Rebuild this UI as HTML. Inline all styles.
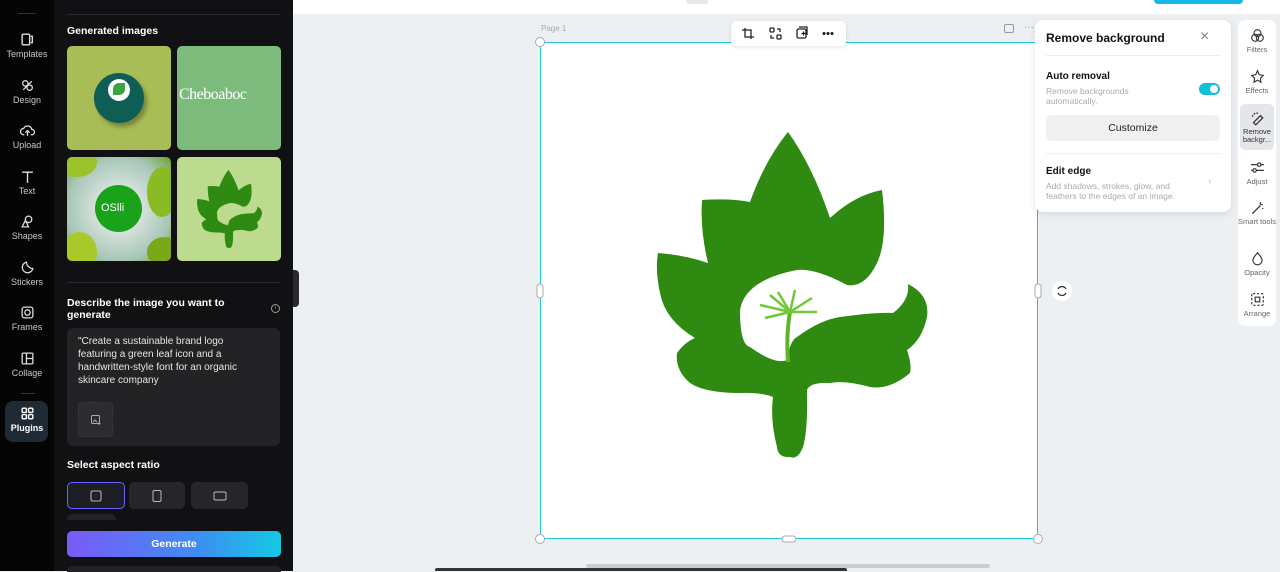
<!DOCTYPE html>
<html><head><meta charset="utf-8"><style>
*{margin:0;padding:0;box-sizing:border-box}
body{width:1280px;height:571px;overflow:hidden;position:relative;background:#edf0f3;font-family:"Liberation Sans",sans-serif}
.a{position:absolute}
.nav{left:0;top:0;width:54px;height:571px;background:#050505}
.ni{position:absolute;left:0;width:54px;text-align:center;color:#c8c8cc;font-size:9px}
.ni svg{display:block;margin:0 auto 2px}
.panel{left:54px;top:0;width:239px;height:571px;background:#111114}
.w{color:#fff;font-weight:bold;font-size:10.5px}
.img{position:absolute;width:104px;height:104px;border-radius:5px;overflow:hidden}
.ar{position:absolute;top:482px;height:27px;background:#26262a;border-radius:5px}
.ar i{position:absolute;left:50%;top:50%;transform:translate(-50%,-50%);border:1.3px solid #bbb;border-radius:2px}
.ti{position:absolute;left:0;width:38px;text-align:center;font-size:7.5px;color:#666}
.ti svg{display:block;margin:0 auto 2px}
</style></head><body>
<div class="a" style="left:293px;top:0;width:987px;height:14px;background:#fff"></div>
<div class="a" style="left:686px;top:0;width:22px;height:4px;background:#e8e8ea;border-radius:0 0 3px 3px"></div>
<div class="a" style="left:1154px;top:0;width:89px;height:4px;background:#17b8e8;border-radius:0 0 4px 4px"></div>

<div class="a nav">
<div class="a" style="left:18px;top:13px;width:18px;height:1px;background:#333"></div>
<div class="ni" style="top:32px"><svg width="15" height="15" viewBox="0 0 14 14" fill="none" stroke="#ddd" stroke-width="1.3"><rect x="2" y="2" width="7" height="10" rx="1"/><path d="M10 4h1.5v6H10"/></svg>Templates</div>
<div class="ni" style="top:78px"><svg width="15" height="15" viewBox="0 0 14 14" fill="none" stroke="#ddd" stroke-width="1.2"><circle cx="5" cy="5" r="2.5"/><circle cx="9" cy="9" r="2.5"/><path d="M3 11l8-8"/></svg>Design</div>
<div class="ni" style="top:123px"><svg width="15" height="15" viewBox="0 0 14 14" fill="none" stroke="#ddd" stroke-width="1.2"><path d="M4 11H3.5a3 3 0 0 1 0-6 4 4 0 0 1 7.5 1 2.5 2.5 0 0 1 0 5H10M7 12V7M5 9l2-2 2 2"/></svg>Upload</div>
<div class="ni" style="top:169px"><svg width="15" height="15" viewBox="0 0 14 14" fill="none" stroke="#ddd" stroke-width="1.3"><path d="M2 3h10M7 3v10"/></svg>Text</div>
<div class="ni" style="top:214px"><svg width="15" height="15" viewBox="0 0 14 14" fill="none" stroke="#ddd" stroke-width="1.2"><circle cx="8" cy="5" r="3"/><path d="M2 12l3-6 3 6z"/></svg>Shapes</div>
<div class="ni" style="top:260px"><svg width="15" height="15" viewBox="0 0 14 14" fill="none" stroke="#ddd" stroke-width="1.2"><path d="M12 8a5 5 0 1 1-6-6c0 3 3 6 6 6z"/></svg>Stickers</div>
<div class="ni" style="top:305px"><svg width="15" height="15" viewBox="0 0 14 14" fill="none" stroke="#ddd" stroke-width="1.2"><rect x="2" y="2" width="10" height="10" rx="2"/><circle cx="7" cy="7" r="2.5"/></svg>Frames</div>
<div class="ni" style="top:351px"><svg width="15" height="15" viewBox="0 0 14 14" fill="none" stroke="#ddd" stroke-width="1.2"><rect x="2" y="2" width="10" height="10" rx="1"/><path d="M6 2v10M6 7h6"/></svg>Collage</div>
<div class="a" style="left:21px;top:393px;width:14px;height:1px;background:#333"></div>
<div class="a" style="left:5px;top:401px;width:43px;height:41px;background:#1e2a36;border-radius:8px"></div>
<div class="ni" style="top:406px;color:#fff;font-weight:bold"><svg width="15" height="15" viewBox="0 0 14 14" fill="none" stroke="#fff" stroke-width="1.3"><rect x="2" y="2" width="4" height="4" rx="1"/><rect x="8" y="2" width="4" height="4" rx="1"/><rect x="2" y="8" width="4" height="4" rx="1"/><rect x="8" y="8" width="4" height="4" rx="1"/></svg>Plugins</div>
</div>

<div class="a panel">
<div class="a" style="left:13px;top:14px;width:214px;height:1px;background:#2a2a2e"></div>
<div class="a w" style="left:13px;top:25px">Generated images</div>
<div class="img" style="left:13px;top:46px;background:#a9bd57"><div class="a" style="left:27px;top:27px;width:50px;height:50px;border-radius:50%;background:#0e5e55;box-shadow:3px 4px 4px rgba(0,0,0,.3)"></div><div class="a" style="left:41px;top:33px;width:22px;height:22px;border-radius:50%;background:#fff"></div><div class="a" style="left:46px;top:37px;width:12px;height:12px;border-radius:50% 0;background:#3aa33a"></div></div>
<div class="img" style="left:123px;top:46px;background:#7dbb7c"><div class="a" style="left:2px;top:40px;color:#fff;font-size:16px;font-family:'Liberation Serif',serif;letter-spacing:-0.5px">Cheboaboc</div></div>
<div class="img" style="left:13px;top:157px;background:radial-gradient(circle,#d6e2dc 30%,#a8c6b8 70%,#6aa22a 100%)"><div class="a" style="left:28px;top:28px;width:47px;height:47px;border-radius:50%;background:#1aa21a"></div><div class="a" style="left:34px;top:45px;color:#fff;font-size:11px">OSlli</div><div class="a" style="left:-10px;top:-10px;width:40px;height:30px;border-radius:50%;background:#9cc22a"></div><div class="a" style="left:80px;top:10px;width:30px;height:50px;border-radius:50%;background:#8bbb22"></div><div class="a" style="left:-5px;top:75px;width:35px;height:40px;border-radius:50%;background:#a9c82a"></div><div class="a" style="left:80px;top:80px;width:35px;height:30px;border-radius:50%;background:#7aa818"></div></div>
<div class="img" style="left:123px;top:157px;background:#bddb8e"><svg class="a" style="left:10px;top:10px" width="84" height="84" viewBox="640 120 300 350"><path d="M788,132 Q812,165 830,218 Q855,195 882,190 Q888,240 877,263 Q865,288 847,285 Q815,268 797,270 Q745,280 740,310 Q740,345 750,347 Q775,365 787,360 Q790,340 797,337 Q820,320 840,317 Q875,312 893,313 Q910,300 908,284 Q930,295 927,317 Q922,340 907,350 Q912,365 910,373 Q890,390 870,387 Q845,380 830,383 Q810,382 807,390 Q808,430 803,447 Q798,460 790,457 Q778,458 777,447 Q770,420 773,397 Q760,392 740,393 Q705,393 690,383 Q675,370 677,353 Q685,342 695,338 Q665,320 660,293 Q655,270 658,253 Q685,255 708,263 Q700,230 702,200 Q730,198 750,202 Q765,160 788,132 Z" fill="#2e8a10"/></svg></div>
<div class="a" style="left:13px;top:282px;width:214px;height:1px;background:#2a2a2e"></div>
<div class="a w" style="left:13px;top:297px;line-height:12px;width:175px">Describe the image you want to generate</div>
<div class="a" style="left:217px;top:304px;width:9px;height:9px;border:1px solid #999;border-radius:50%;color:#999;font-size:6px;text-align:center;line-height:7px">i</div>
<div class="a" style="left:13px;top:328px;width:213px;height:118px;background:#232326;border-radius:6px"></div>
<div class="a" style="left:24px;top:335px;width:182px;color:#e6e6e6;font-size:10px;line-height:13px">"Create a sustainable brand logo featuring a green leaf icon and a handwritten-style font for an organic skincare company</div>
<div class="a" style="left:24px;top:402px;width:35px;height:35px;background:#2c2c30;border:1px dashed #3a3a3e;border-radius:4px"><svg class="a" style="left:11px;top:11px" width="12" height="12" viewBox="0 0 12 12" fill="none" stroke="#aaa" stroke-width="1"><rect x="1.5" y="1.5" width="8" height="8" rx="1"/><path d="M3 8l2-2 2 2M9 8v3M7.5 9.5h3"/></svg></div>
<div class="a w" style="left:13px;top:459px">Select aspect ratio</div>
<div class="ar" style="left:13px;width:58px;border:1.5px solid #6b63ff;background:#1e1e26"><i style="width:11px;height:11px"></i></div>
<div class="ar" style="left:75px;width:56px"><i style="width:9px;height:12px"></i></div>
<div class="ar" style="left:137px;width:57px"><i style="width:13px;height:9px"></i></div>
<div class="a" style="left:13px;top:514px;width:49px;height:6px;background:#232326;border-radius:5px 5px 0 0"></div>
<div class="a" style="left:13px;top:531px;width:214px;height:26px;border-radius:5px;background:linear-gradient(90deg,#7a5af8,#3f8cf2 60%,#14c8e4);color:#fff;font-size:10.5px;font-weight:bold;text-align:center;line-height:26px">Generate</div>
<div class="a" style="left:13px;top:566px;width:214px;height:6px;background:#232326;border-radius:5px 5px 0 0"></div>
</div>
<div class="a" style="left:293px;top:270px;width:6px;height:37px;background:#2a2a2e;border-radius:0 4px 4px 0"></div>

<div class="a" style="left:541px;top:24px;font-size:8px;color:#aaa">Page 1</div>
<div class="a" style="left:540px;top:42px;width:498px;height:497px;background:#fff;border:1.5px solid #22c7d8"></div>
<svg class="a" style="left:0;top:0" width="1280" height="571"><path d="M788,132 Q812,165 830,218 Q855,195 882,190 Q888,240 877,263 Q865,288 847,285 Q815,268 797,270 Q745,280 740,310 Q740,345 750,347 Q775,365 787,360 Q790,340 797,337 Q820,320 840,317 Q875,312 893,313 Q910,300 908,284 Q930,295 927,317 Q922,340 907,350 Q912,365 910,373 Q890,390 870,387 Q845,380 830,383 Q810,382 807,390 Q808,430 803,447 Q798,460 790,457 Q778,458 777,447 Q770,420 773,397 Q760,392 740,393 Q705,393 690,383 Q675,370 677,353 Q685,342 695,338 Q665,320 660,293 Q655,270 658,253 Q685,255 708,263 Q700,230 702,200 Q730,198 750,202 Q765,160 788,132 Z" fill="#2e8a10"/>
<path d="M788,362 Q786,335 790,312" stroke="#5fb52a" stroke-width="4" fill="none"/>
<g stroke="#72c63a" stroke-width="2.5" fill="none"><path d="M790,312 L760,305"/><path d="M790,312 L765,318"/><path d="M790,312 L778,292"/><path d="M790,312 L795,290"/><path d="M790,312 L812,298"/><path d="M790,312 L817,312"/><path d="M790,312 L770,295"/></g>
<circle cx="540" cy="42" r="4.5" fill="#fff" stroke="#aaa"/><circle cx="540" cy="539" r="4.5" fill="#fff" stroke="#aaa"/><circle cx="1038" cy="539" r="4.5" fill="#fff" stroke="#aaa"/>
<rect x="537" y="284" width="6" height="14" rx="3" fill="#fff" stroke="#aaa"/><rect x="1035" y="284" width="6" height="14" rx="3" fill="#fff" stroke="#aaa"/><rect x="782" y="536" width="14" height="6" rx="3" fill="#fff" stroke="#aaa"/>
<circle cx="1062" cy="291" r="10" fill="#fff"/><path d="M1058,289a4.5,4.5 0 0 1 8,0M1066,293a4.5,4.5 0 0 1-8,0" stroke="#333" stroke-width="1.3" fill="none"/>
<rect x="586" y="564" width="404" height="4" rx="2" fill="#c9ccd0"/>
<rect x="435" y="568" width="412" height="4" rx="2" fill="#333"/>
</svg>
<div class="a" style="left:731px;top:21px;width:115px;height:25px;background:#fff;border-radius:5px;box-shadow:0 1px 4px rgba(0,0,0,.12)">
<svg class="a" style="left:0;top:0" width="115" height="25" fill="none" stroke="#222" stroke-width="1.3"><path d="M14 7v9h9M11 9h9v9"/><rect x="39" y="7" width="4" height="4" rx="1"/><rect x="46" y="14" width="4" height="4" rx="1"/><path d="M46 8h3v3M43 17h-3v-3"/><rect x="66" y="8" width="9" height="9" rx="1.5"/><path d="M68 6h8v8M70.5 12.5h4M72.5 10.5v4"/><circle cx="93" cy="12.5" r=".9" fill="#222"/><circle cx="97" cy="12.5" r=".9" fill="#222"/><circle cx="101" cy="12.5" r=".9" fill="#222"/></svg></div>
<div class="a" style="left:1004px;top:24px;width:10px;height:9px;border:1.3px solid #999;border-radius:2px"></div>
<div class="a" style="left:1024px;top:22px;color:#999;font-size:10px">···</div>

<div class="a" style="left:1035px;top:20px;width:196px;height:192px;background:#fff;border-radius:8px;box-shadow:0 2px 8px rgba(0,0,0,.1)">
<div class="a" style="left:11px;top:11px;font-size:12px;font-weight:bold;color:#111">Remove background</div>
<div class="a" style="left:165px;top:8px;font-size:16px;color:#888">×</div>
<div class="a" style="left:11px;top:35px;width:174px;height:1px;background:#eee"></div>
<div class="a" style="left:11px;top:51px;font-size:10px;font-weight:bold;color:#111">Auto removal</div>
<div class="a" style="left:11px;top:66px;font-size:8.5px;color:#aaa;line-height:10px;width:110px">Remove backgrounds automatically.</div>
<div class="a" style="left:164px;top:63px;width:21px;height:12px;border-radius:6px;background:#14c0d8"><div class="a" style="left:11px;top:2px;width:8px;height:8px;border-radius:50%;background:#fff"></div></div>
<div class="a" style="left:11px;top:95px;width:174px;height:26px;background:#eef0f2;border-radius:5px;font-size:10.5px;color:#222;text-align:center;line-height:26px">Customize</div>
<div class="a" style="left:11px;top:133px;width:174px;height:1px;background:#eee"></div>
<div class="a" style="left:11px;top:146px;font-size:10px;font-weight:bold;color:#111">Edit edge</div>
<div class="a" style="left:11px;top:161px;font-size:8.5px;color:#aaa;line-height:10px;width:150px">Add shadows, strokes, glow, and feathers to the edges of an image.</div>
<div class="a" style="left:173px;top:156px;font-size:10px;color:#bbb">›</div>
</div>

<div class="a" style="left:1238px;top:20px;width:38px;height:306px;background:#fff;border-radius:7px">
<div class="a" style="left:2px;top:84px;width:34px;height:46px;background:#e4e6e9;border-radius:5px"></div>
<div class="ti" style="top:8px"><svg width="15" height="15" viewBox="0 0 13 13" fill="none" stroke="#333" stroke-width="1"><circle cx="6.5" cy="4.5" r="3"/><circle cx="4.5" cy="8.5" r="3"/><circle cx="8.5" cy="8.5" r="3"/></svg>Filters</div>
<div class="ti" style="top:49px"><svg width="15" height="15" viewBox="0 0 13 13" fill="none" stroke="#333" stroke-width="1"><path d="M6.5 1.5l1.5 3.5 3.5.5-2.5 2.5.5 3.5-3-1.8-3 1.8.5-3.5L1.5 5.5 5 5z"/></svg>Effects</div>
<div class="ti" style="top:91px;color:#333;line-height:8px"><svg width="15" height="15" viewBox="0 0 13 13" fill="none" stroke="#333" stroke-width="1.1"><path d="M3 10l6-6 2 2-6 6z"/><path d="M2 5a4 4 0 0 1 5-3" stroke-dasharray="1.5 1"/></svg>Remove backgr...</div>
<div class="ti" style="top:140px"><svg width="15" height="15" viewBox="0 0 13 13" fill="none" stroke="#333" stroke-width="1"><path d="M1 4h11M1 9h11"/><circle cx="8" cy="4" r="1.5" fill="#fff"/><circle cx="4" cy="9" r="1.5" fill="#fff"/></svg>Adjust</div>
<div class="ti" style="top:181px;line-height:8px"><svg width="15" height="15" viewBox="0 0 13 13" fill="none" stroke="#333" stroke-width="1.1"><path d="M2 11l7-7M9 1v2M11 3h-2M11 6v1"/></svg>Smart tools</div>
<div class="ti" style="top:231px"><svg width="15" height="15" viewBox="0 0 13 13" fill="none" stroke="#333" stroke-width="1"><path d="M6.5 1.5Q10.5 6 10.5 8a4 4 0 0 1-8 0Q2.5 6 6.5 1.5z"/></svg>Opacity</div>
<div class="ti" style="top:272px"><svg width="15" height="15" viewBox="0 0 13 13" fill="none" stroke="#333" stroke-width="1"><rect x="1.5" y="1.5" width="10" height="10" rx="1" stroke-dasharray="2 1.5"/><rect x="4.5" y="4.5" width="4" height="4"/></svg>Arrange</div>
</div>
</body></html>
